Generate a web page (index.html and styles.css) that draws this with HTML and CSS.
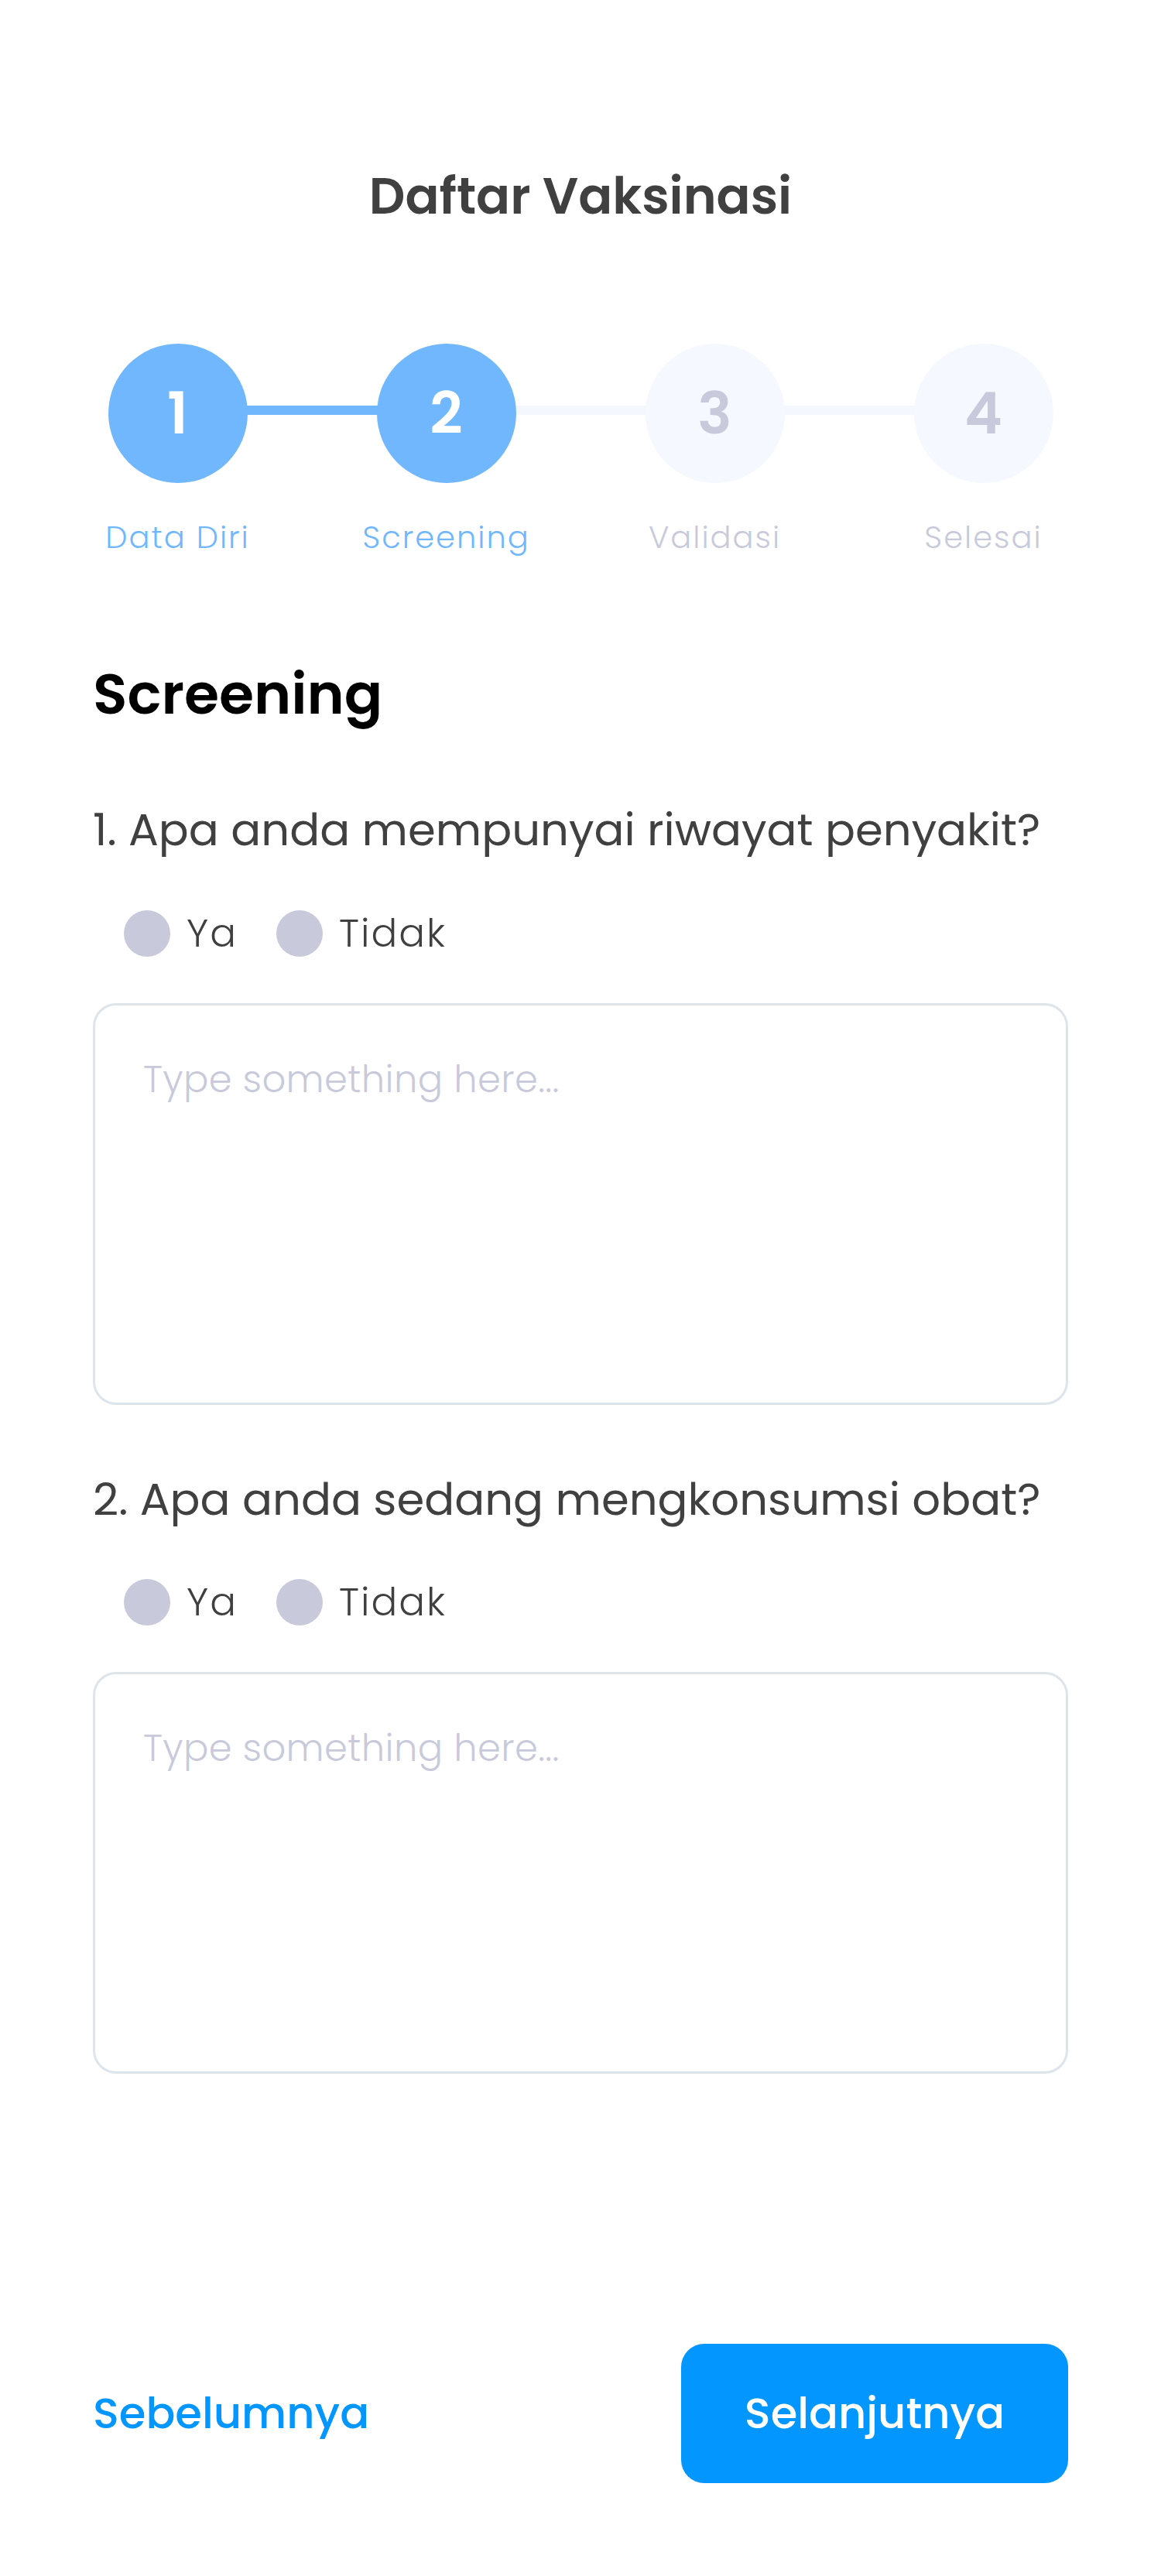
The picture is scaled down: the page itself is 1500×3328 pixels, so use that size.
FILE: index.html
```html
<!DOCTYPE html>
<html lang="id">
<head>
<meta charset="utf-8">
<title>Daftar Vaksinasi</title>
<link rel="stylesheet" href="styles.css">
</head>
<body>
<main class="page">
  <h1 class="title">Daftar Vaksinasi</h1>

  <ol class="stepper">
    <li class="step is-active">
      <span class="step-circle">1</span>
      <span class="step-label">Data Diri</span>
    </li>
    <li class="step is-active is-current">
      <span class="step-circle">2</span>
      <span class="step-label">Screening</span>
    </li>
    <li class="step">
      <span class="step-circle">3</span>
      <span class="step-label">Validasi</span>
    </li>
    <li class="step">
      <span class="step-circle">4</span>
      <span class="step-label">Selesai</span>
    </li>
  </ol>

  <section class="form">
    <h2 class="section-title">Screening</h2>

    <div class="question">
      <p class="q-text">1. Apa anda mempunyai riwayat penyakit?</p>
      <div class="radio-row">
        <label class="radio"><span class="radio-dot"></span><span class="radio-text">Ya</span></label>
        <label class="radio"><span class="radio-dot"></span><span class="radio-text">Tidak</span></label>
      </div>
      <textarea class="answer" placeholder="Type something here..."></textarea>
    </div>

    <div class="question">
      <p class="q-text">2. Apa anda sedang mengkonsumsi obat?</p>
      <div class="radio-row">
        <label class="radio"><span class="radio-dot"></span><span class="radio-text">Ya</span></label>
        <label class="radio"><span class="radio-dot"></span><span class="radio-text">Tidak</span></label>
      </div>
      <textarea class="answer" placeholder="Type something here..."></textarea>
    </div>
  </section>

  <footer class="actions">
    <a class="btn-link" href="#">Sebelumnya</a>
    <button class="btn-primary" type="button">Selanjutnya</button>
  </footer>
</main>
</body>
</html>
```

FILE: styles.css
```css
* {
  box-sizing: border-box;
}

html, body {
  margin: 0;
  padding: 0;
  background: #ffffff;
}

body {
  font-family: "Poppins", "Open Sans", "Noto Sans", sans-serif;
  color: #404040;
}

.page {
  min-height: 3328px;
  padding: 221px 120px 120px;
  display: flex;
  flex-direction: column;
}

.title {
  margin: 0;
  font-size: 65px;
  line-height: 1;
  font-weight: 600;
  text-align: center;
  color: #404040;
}

/* Stepper */
.stepper {
  list-style: none;
  margin: 158px -64px 0;
  padding: 0;
  display: grid;
  grid-template-columns: repeat(4, 1fr);
}

.step {
  position: relative;
  display: flex;
  flex-direction: column;
  align-items: center;
}

.step:not(:last-child)::after {
  content: "";
  position: absolute;
  top: 80px;
  left: 50%;
  width: 100%;
  height: 12px;
  background: #f4f7fe;
  z-index: 0;
}

.step.is-active:not(.is-current)::after {
  background: #70b7fd;
}

.step-circle {
  position: relative;
  z-index: 1;
  width: 180px;
  height: 180px;
  border-radius: 50%;
  background: #f5f8fe;
  color: #c8cadb;
  display: flex;
  align-items: center;
  justify-content: center;
  font-size: 74px;
  font-weight: 600;
  line-height: 1;
}

.step.is-active .step-circle {
  background: #70b7fd;
  color: #ffffff;
}

.step-label {
  margin-top: 50px;
  font-size: 40px;
  line-height: 1;
  font-weight: 300;
  letter-spacing: 2px;
  color: #c8cadb;
  white-space: nowrap;
}

.step.is-active .step-label {
  color: #70b7fd;
}

/* Form */
.section-title {
  margin: 146px 0 0;
  font-size: 73px;
  line-height: 1;
  font-weight: 600;
  color: #000000;
}

.question {
  margin-top: 110px;
}

.question + .question {
  margin-top: 93px;
}

.q-text {
  margin: 0;
  font-size: 57.7px;
  line-height: 1;
  font-weight: 400;
  color: #404040;
  white-space: nowrap;
}

.radio-row {
  margin-top: 75px;
  padding-left: 40px;
  display: flex;
  align-items: center;
  gap: 50px;
}

.radio {
  display: flex;
  align-items: center;
  gap: 21px;
}

.radio-dot {
  width: 60px;
  height: 60px;
  border-radius: 50%;
  background: #c8cadb;
  flex: none;
}

.radio-text {
  font-size: 50px;
  line-height: 1;
  font-weight: 300;
  letter-spacing: 2px;
  color: #404040;
}

.answer {
  display: block;
  width: 100%;
  height: 519px;
  margin-top: 60px;
  padding: 72px 62px;
  border: 3px solid #dde5ea;
  border-radius: 30px;
  background: #ffffff;
  font-family: inherit;
  font-size: 48px;
  line-height: 1;
  font-weight: 300;
  letter-spacing: 0.4px;
  color: #404040;
  resize: none;
  outline: none;
}

.answer::placeholder {
  color: #c8cadb;
  opacity: 1;
}

/* Actions */
.actions {
  margin-top: auto;
  display: flex;
  align-items: center;
  justify-content: space-between;
}

.btn-link {
  font-size: 56px;
  line-height: 1;
  font-weight: 500;
  color: #0396ff;
  text-decoration: none;
}

.btn-primary {
  width: 500px;
  height: 180px;
  border: none;
  border-radius: 30px;
  background: #0396ff;
  color: #ffffff;
  font-family: inherit;
  font-size: 56px;
  line-height: 1;
  font-weight: 500;
  cursor: pointer;
}
```
